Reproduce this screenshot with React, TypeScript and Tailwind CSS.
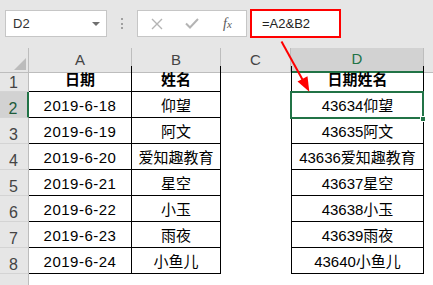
import React from "react";

const rows: [string, string, string][] = [
  ["2019-6-18", "仰望", "43634仰望"],
  ["2019-6-19", "阿文", "43635阿文"],
  ["2019-6-20", "爱知趣教育", "43636爱知趣教育"],
  ["2019-6-21", "星空", "43637星空"],
  ["2019-6-22", "小玉", "43638小玉"],
  ["2019-6-23", "雨夜", "43639雨夜"],
  ["2019-6-24", "小鱼儿", "43640小鱼儿"],
];

const grid = "grid grid-cols-[29px_103px_89px_70px_133px_1fr]";

function RowHead({ n, active }: { n: number; active?: boolean }) {
  return (
    <div
      className={
        "h-[26px] flex items-end justify-center border-b border-[#d4d4d4] text-[16px] leading-[16px] " +
        (active
          ? "bg-[#d2d2d2] border-r-2 border-r-[#217346] text-[#1e5b3a]"
          : "bg-[#e6e6e6] border-r border-r-[#bdbdbd] text-[#444]")
      }
    >
      <span className="pr-[1px]">{n}</span>
    </div>
  );
}

function Cell({ children, bold, wide }: { children?: React.ReactNode; bold?: boolean; wide?: boolean }) {
  return (
    <div
      className={
        "h-[26px] flex items-center justify-center pt-[3px] border-r border-b border-black text-[15px] text-black whitespace-nowrap " +
        (bold ? "font-bold " : "") +
        (wide ? "tracking-[0.5px]" : "")
      }
    >
      {children}
    </div>
  );
}

export default function App() {
  return (
    <div
      className="relative w-[433px] h-[285px] overflow-hidden bg-white"
      style={{ fontFamily: '"Liberation Sans", "Noto Sans CJK SC", sans-serif' }}
    >
      {/* formula toolbar */}
      <div className="h-[48px] bg-[#e6e6e6] flex items-start pt-[10px] pl-[5px]">
        <div className="w-[102px] h-[27px] bg-white border border-[#c6c6c6] flex items-center justify-between pl-[7px] pr-[6px]">
          <span className="text-[13px] text-[#333]">D2</span>
          <span className="w-0 h-0 border-l-[4px] border-r-[4px] border-t-[4px] border-l-transparent border-r-transparent border-t-[#6f6f6f]" />
        </div>
        <div className="w-[30px] h-[27px] flex flex-col items-center justify-center gap-[2.5px]">
          <span className="w-[2px] h-[2px] bg-[#a0a0a0]" />
          <span className="w-[2px] h-[2px] bg-[#a0a0a0]" />
          <span className="w-[2px] h-[2px] bg-[#a0a0a0]" />
        </div>
        <div className="w-[110px] h-[27px] bg-white border border-[#c6c6c6] flex items-center">
          <svg width="12" height="12" viewBox="0 0 12 12" className="ml-[13px]">
            <path d="M1 1 L11 11 M11 1 L1 11" stroke="#b4b4b4" strokeWidth="1.4" />
          </svg>
          <svg width="14" height="11" viewBox="0 0 14 11" className="ml-[22px]">
            <path d="M1 5.5 L5 9.5 L13 1" stroke="#b4b4b4" strokeWidth="2" fill="none" />
          </svg>
          <span
            className="ml-[24px] text-[14px] italic text-[#595959]"
            style={{ fontFamily: '"Liberation Serif", serif' }}
          >
            f<span className="text-[11px]">x</span>
          </span>
        </div>
        <div className="ml-[3px] -mt-[1px] w-[91px] h-[29px] bg-white border-2 border-[#ff0000] flex items-center pl-[10px]">
          <span className="text-[13px] text-[#222]">=A2&amp;B2</span>
        </div>
      </div>

      {/* column headers */}
      <div className={grid + " h-[18px] text-[15px] text-[#444]"}>
        <div className="relative bg-[#e6e6e6] border-r border-b border-[#bdbdbd]">
          <span className="absolute right-[2px] bottom-[2px] w-0 h-0" style={{ borderBottom: "12px solid #bcbcbc", borderLeft: "12px solid transparent" }} />
        </div>
        <div className="bg-[#e6e6e6] border-r border-b border-[#bdbdbd] flex items-center justify-center">A</div>
        <div className="bg-[#e6e6e6] border-r border-b border-[#bdbdbd] flex items-center justify-center">B</div>
        <div className="bg-[#e6e6e6] border-r border-b border-[#bdbdbd] flex items-center justify-center">C</div>
        <div className="bg-[#d2d2d2] border-r border-r-[#bdbdbd] border-b-2 border-b-[#217346] flex items-center justify-center text-[#217346]">D</div>
        <div className="bg-[#e6e6e6] border-b border-[#bdbdbd]" />
      </div>

      {/* body */}
      <div className={grid}>
        <RowHead n={1} />
        <Cell bold>日期</Cell>
        <Cell bold>姓名</Cell>
        <div />
        <div className="border-l border-black">
          <Cell bold>日期姓名</Cell>
        </div>
        <div />
        {rows.map(([a, b, d], i) => (
          <React.Fragment key={a}>
            <RowHead n={i + 2} active={i === 0} />
            <Cell wide>{a}</Cell>
            <Cell>{b}</Cell>
            <div />
            <div className="border-l border-black">
              <Cell>{d}</Cell>
            </div>
            <div />
          </React.Fragment>
        ))}
        <div className="h-[12px] bg-[#e6e6e6] border-r border-[#bdbdbd]" />
      </div>

      {/* selection on D2 */}
      <div className="absolute left-[290px] top-[91px] w-[134px] h-[28px] border-2 border-[#217346]" />
      <div className="absolute left-[420px] top-[116px] w-[6px] h-[6px] bg-[#217346] border border-white" />

      {/* red arrow */}
      <svg className="absolute left-0 top-0 pointer-events-none" width="433" height="285">
        <line x1="281.5" y1="41.5" x2="303" y2="80.5" stroke="#ff0000" strokeWidth="2" />
        <polygon points="309.3,91.7 297.5,81.5 307.5,76.2" fill="#ff0000" />
      </svg>
    </div>
  );
}
